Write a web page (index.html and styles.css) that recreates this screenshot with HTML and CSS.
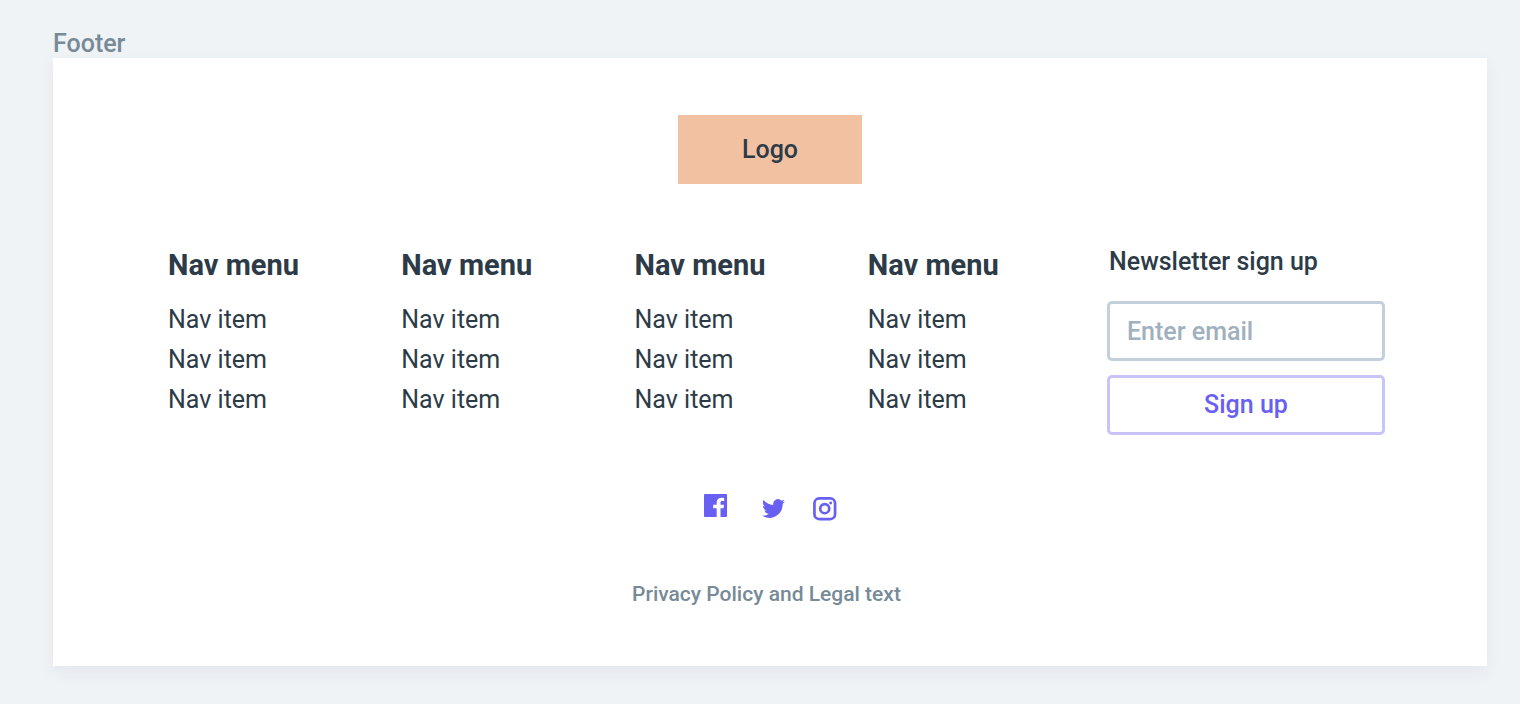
FILE: index.html
```html
<!DOCTYPE html>
<html lang="en">
<head>
<meta charset="utf-8">
<meta name="viewport" content="width=device-width, initial-scale=1">
<title>Footer</title>
<link rel="stylesheet" href="styles.css">
</head>
<body>
<h1 class="frame-title">Footer</h1>
<footer class="footer">
  <div class="logo">Logo</div>
  <div class="columns">
    <nav class="menus" aria-label="Footer">
      <section class="menu">
        <h2 class="menu-title">Nav menu</h2>
        <ul class="menu-list">
          <li><a href="#">Nav item</a></li>
          <li><a href="#">Nav item</a></li>
          <li><a href="#">Nav item</a></li>
        </ul>
      </section>
      <section class="menu">
        <h2 class="menu-title">Nav menu</h2>
        <ul class="menu-list">
          <li><a href="#">Nav item</a></li>
          <li><a href="#">Nav item</a></li>
          <li><a href="#">Nav item</a></li>
        </ul>
      </section>
      <section class="menu">
        <h2 class="menu-title">Nav menu</h2>
        <ul class="menu-list">
          <li><a href="#">Nav item</a></li>
          <li><a href="#">Nav item</a></li>
          <li><a href="#">Nav item</a></li>
        </ul>
      </section>
      <section class="menu">
        <h2 class="menu-title">Nav menu</h2>
        <ul class="menu-list">
          <li><a href="#">Nav item</a></li>
          <li><a href="#">Nav item</a></li>
          <li><a href="#">Nav item</a></li>
        </ul>
      </section>
    </nav>
    <form class="newsletter">
      <label class="newsletter-label" for="email">Newsletter sign up</label>
      <input class="field" id="email" type="email" placeholder="Enter email">
      <button class="button" type="submit">Sign up</button>
    </form>
  </div>
  <div class="social">
    <a class="social-link facebook" href="#" aria-label="Facebook">
      <svg viewBox="0 0 25 25" width="24" height="24" fill="currentColor"><path d="M1 0H23Q24 0 24 1V23Q24 24 23 24H17.2V14.8H20.4L20.8 11.1H17.2V9.2C17.2 8.1 17.6 7.4 19 7.4H21V4.1C20.4 4 19.5 3.9 18.3 3.9C15.3 3.9 13.2 5.6 13.2 8.7V11.1H9.6V14.8H13.2V24H1Q0 24 0 23V1Q0 0 1 0Z"/></svg>
    </a>
    <a class="social-link twitter" href="#" aria-label="Twitter">
      <svg viewBox="0 0 25 25" width="24" height="24" fill="currentColor"><path d="M23.95 4.57a10 10 0 0 1-2.82.77 4.96 4.96 0 0 0 2.16-2.72c-.95.55-2 .95-3.13 1.18a4.92 4.92 0 0 0-8.38 4.48C7.69 8.09 4.07 6.13 1.64 3.16a4.82 4.82 0 0 0-.67 2.48c0 1.71.87 3.21 2.19 4.1a4.9 4.9 0 0 1-2.23-.62v.06a4.92 4.92 0 0 0 3.95 4.83 5 5 0 0 1-2.21.08 4.94 4.94 0 0 0 4.6 3.42A9.87 9.87 0 0 1 0 19.54a13.99 13.99 0 0 0 7.55 2.21c9.05 0 14-7.5 14-13.98 0-.21 0-.42-.02-.63a9.94 9.94 0 0 0 2.46-2.55z"/></svg>
    </a>
    <a class="social-link instagram" href="#" aria-label="Instagram">
      <svg viewBox="0 0 25 25" width="24" height="24" fill="none" stroke="currentColor"><rect x="1.5" y="1.5" width="21.5" height="21.5" rx="5" stroke-width="2.8"/><circle cx="12.2" cy="12.2" r="4.7" stroke-width="2.8"/><circle cx="18.4" cy="6.2" r="1.5" fill="currentColor" stroke="none"/></svg>
    </a>
  </div>
  <p class="legal">Privacy Policy and Legal text</p>
</footer>
</body>
</html>
```
FILE: styles.css
```css
* {
  box-sizing: border-box;
}

body {
  margin: 0;
  padding: 28px 33px 38px 53px;
  background: #eff3f6;
  color: #2c3b47;
  font: 500 25px/32px Roboto, "Liberation Sans", sans-serif;
}

h1, h2, p, ul {
  margin: 0;
  padding: 0;
}

a {
  color: inherit;
  text-decoration: none;
}

.frame-title {
  height: 30px;
  color: #778a97;
  font-size: 25px;
  font-weight: 500;
}

.footer {
  display: flex;
  flex-direction: column;
  align-items: center;
  padding: 57px 102px 56px 115px;
  background: #fff;
  box-shadow: 0 6px 16px rgba(44, 59, 71, 0.06);
}

.logo {
  width: 184px;
  margin-right: 13px;
  padding: 19px 0 18px;
  background: #f2c1a1;
  text-align: center;
}

.columns {
  display: flex;
  gap: 6px;
  width: 100%;
  margin-top: 62px;
}

.menus {
  display: grid;
  grid-template-columns: repeat(4, 1fr);
  flex: 1;
}

.menu-title {
  padding-top: 3px;
  font-size: 29px;
  line-height: 32px;
  font-weight: 700;
}

.menu-list {
  margin-top: 19px;
  list-style: none;
  font-weight: 400;
  line-height: 40px;
}

.newsletter {
  display: flex;
  flex-direction: column;
  width: 278px;
}

.newsletter-label {
  padding: 0 0 1px 2px;
}

.field,
.button {
  width: 100%;
  height: 60px;
  border: 3px solid #c3d0db;
  border-radius: 5px;
  background: #fff;
  font: inherit;
}

.field {
  margin-top: 22px;
  padding: 0 17px;
  color: inherit;
}

.field::placeholder {
  color: #9fb0be;
  opacity: 1;
}

.button {
  margin-top: 14px;
  padding: 0;
  border-color: #c8c3f9;
  color: #6760f2;
}

.social {
  display: flex;
  align-items: flex-end;
  gap: 27px;
  height: 27px;
  margin: 59px 12px 0 0;
  color: #6760f2;
}

.social-link {
  display: block;
  height: 24px;
}

.social-link svg {
  display: block;
}

.facebook {
  align-self: flex-start;
  margin-right: 7px;
}

.legal {
  margin: 57px 20px 0 0;
  color: #778a97;
  font-size: 21px;
}
```
